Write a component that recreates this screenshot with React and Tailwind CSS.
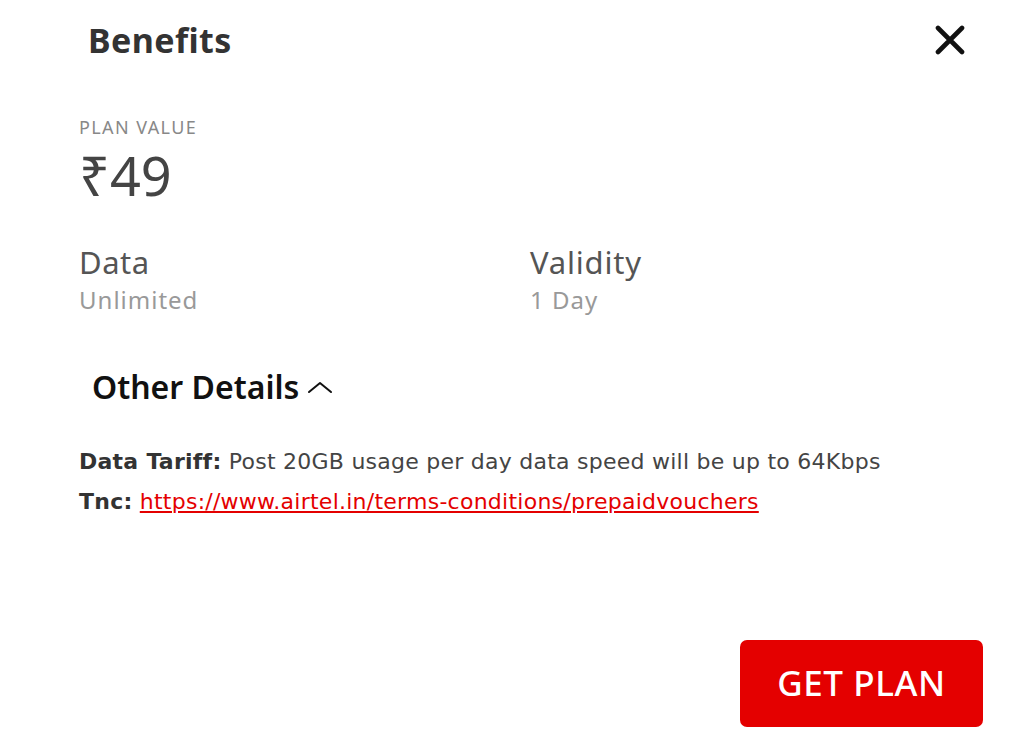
import React from "react";

const CloseIcon = () => (
  <svg width="32" height="30" viewBox="0 0 32 30" fill="none">
    <path d="M4 3L28 27M28 3L4 27" stroke="#111" strokeWidth="4.6" strokeLinecap="round" />
  </svg>
);

const ChevronUp = () => (
  <svg width="26" height="14" viewBox="0 0 26 14" fill="none">
    <path d="M2 12L13 3L24 12" stroke="#111" strokeWidth="2" strokeLinecap="round" strokeLinejoin="round" />
  </svg>
);

const App = () => {
  return (
    <div className="w-[1024px] h-[756px] bg-white flex flex-col font-['Noto_Sans',sans-serif]">
      <div className="flex items-center justify-between pl-[88px] pr-[58px] pt-[20px]">
        <h2 className="text-[34px] leading-[40px] font-bold text-[#333] tracking-[0.4px]">Benefits</h2>
        <CloseIcon />
      </div>

      <div className="pl-[79px] mt-[56px]">
        <p className="text-[18px] leading-[22px] text-[#888] tracking-[1.4px]">PLAN VALUE</p>
        <p className="text-[54px] leading-[62px] text-[#444] mt-[6px]">₹49</p>
      </div>

      <div className="pl-[79px] mt-[35px] grid grid-cols-[451px_1fr]">
        <div>
          <p className="text-[31px] leading-[43px] text-[#555] tracking-[0.5px]">Data</p>
          <p className="text-[24px] leading-[32px] text-[#999] tracking-[1px]">Unlimited</p>
        </div>
        <div>
          <p className="text-[31px] leading-[43px] text-[#555] tracking-[0.8px]">Validity</p>
          <p className="text-[24px] leading-[32px] text-[#999] tracking-[1px]">1 Day</p>
        </div>
      </div>

      <div className="pl-[92px] mt-[51px] flex items-center gap-[8px]">
        <h3 className="text-[32px] leading-[40px] font-semibold text-[#111]">Other Details</h3>
        <ChevronUp />
      </div>

      <div className="pl-[79px] mt-[35px] text-[22px] leading-[40px] text-[#444] font-['DejaVu_Sans',sans-serif] tracking-[0.25px]">
        <p>
          <b className="font-bold text-[#333]">Data Tariff:</b> Post 20GB usage per day data speed will be up to 64Kbps
        </p>
        <p>
          <b className="font-bold text-[#333]">Tnc:</b>{" "}
          <a href="#" className="text-[#e40000] underline">
            https://www.airtel.in/terms-conditions/prepaidvouchers
          </a>
        </p>
      </div>

      <div className="mt-auto flex justify-end pr-[41px] pb-[29px]">
        <button className="w-[243px] h-[87px] rounded-[7px] bg-[#e40000] text-white text-[35px] font-medium tracking-[0.6px]">
          GET PLAN
        </button>
      </div>
    </div>
  );
};

export default App;
